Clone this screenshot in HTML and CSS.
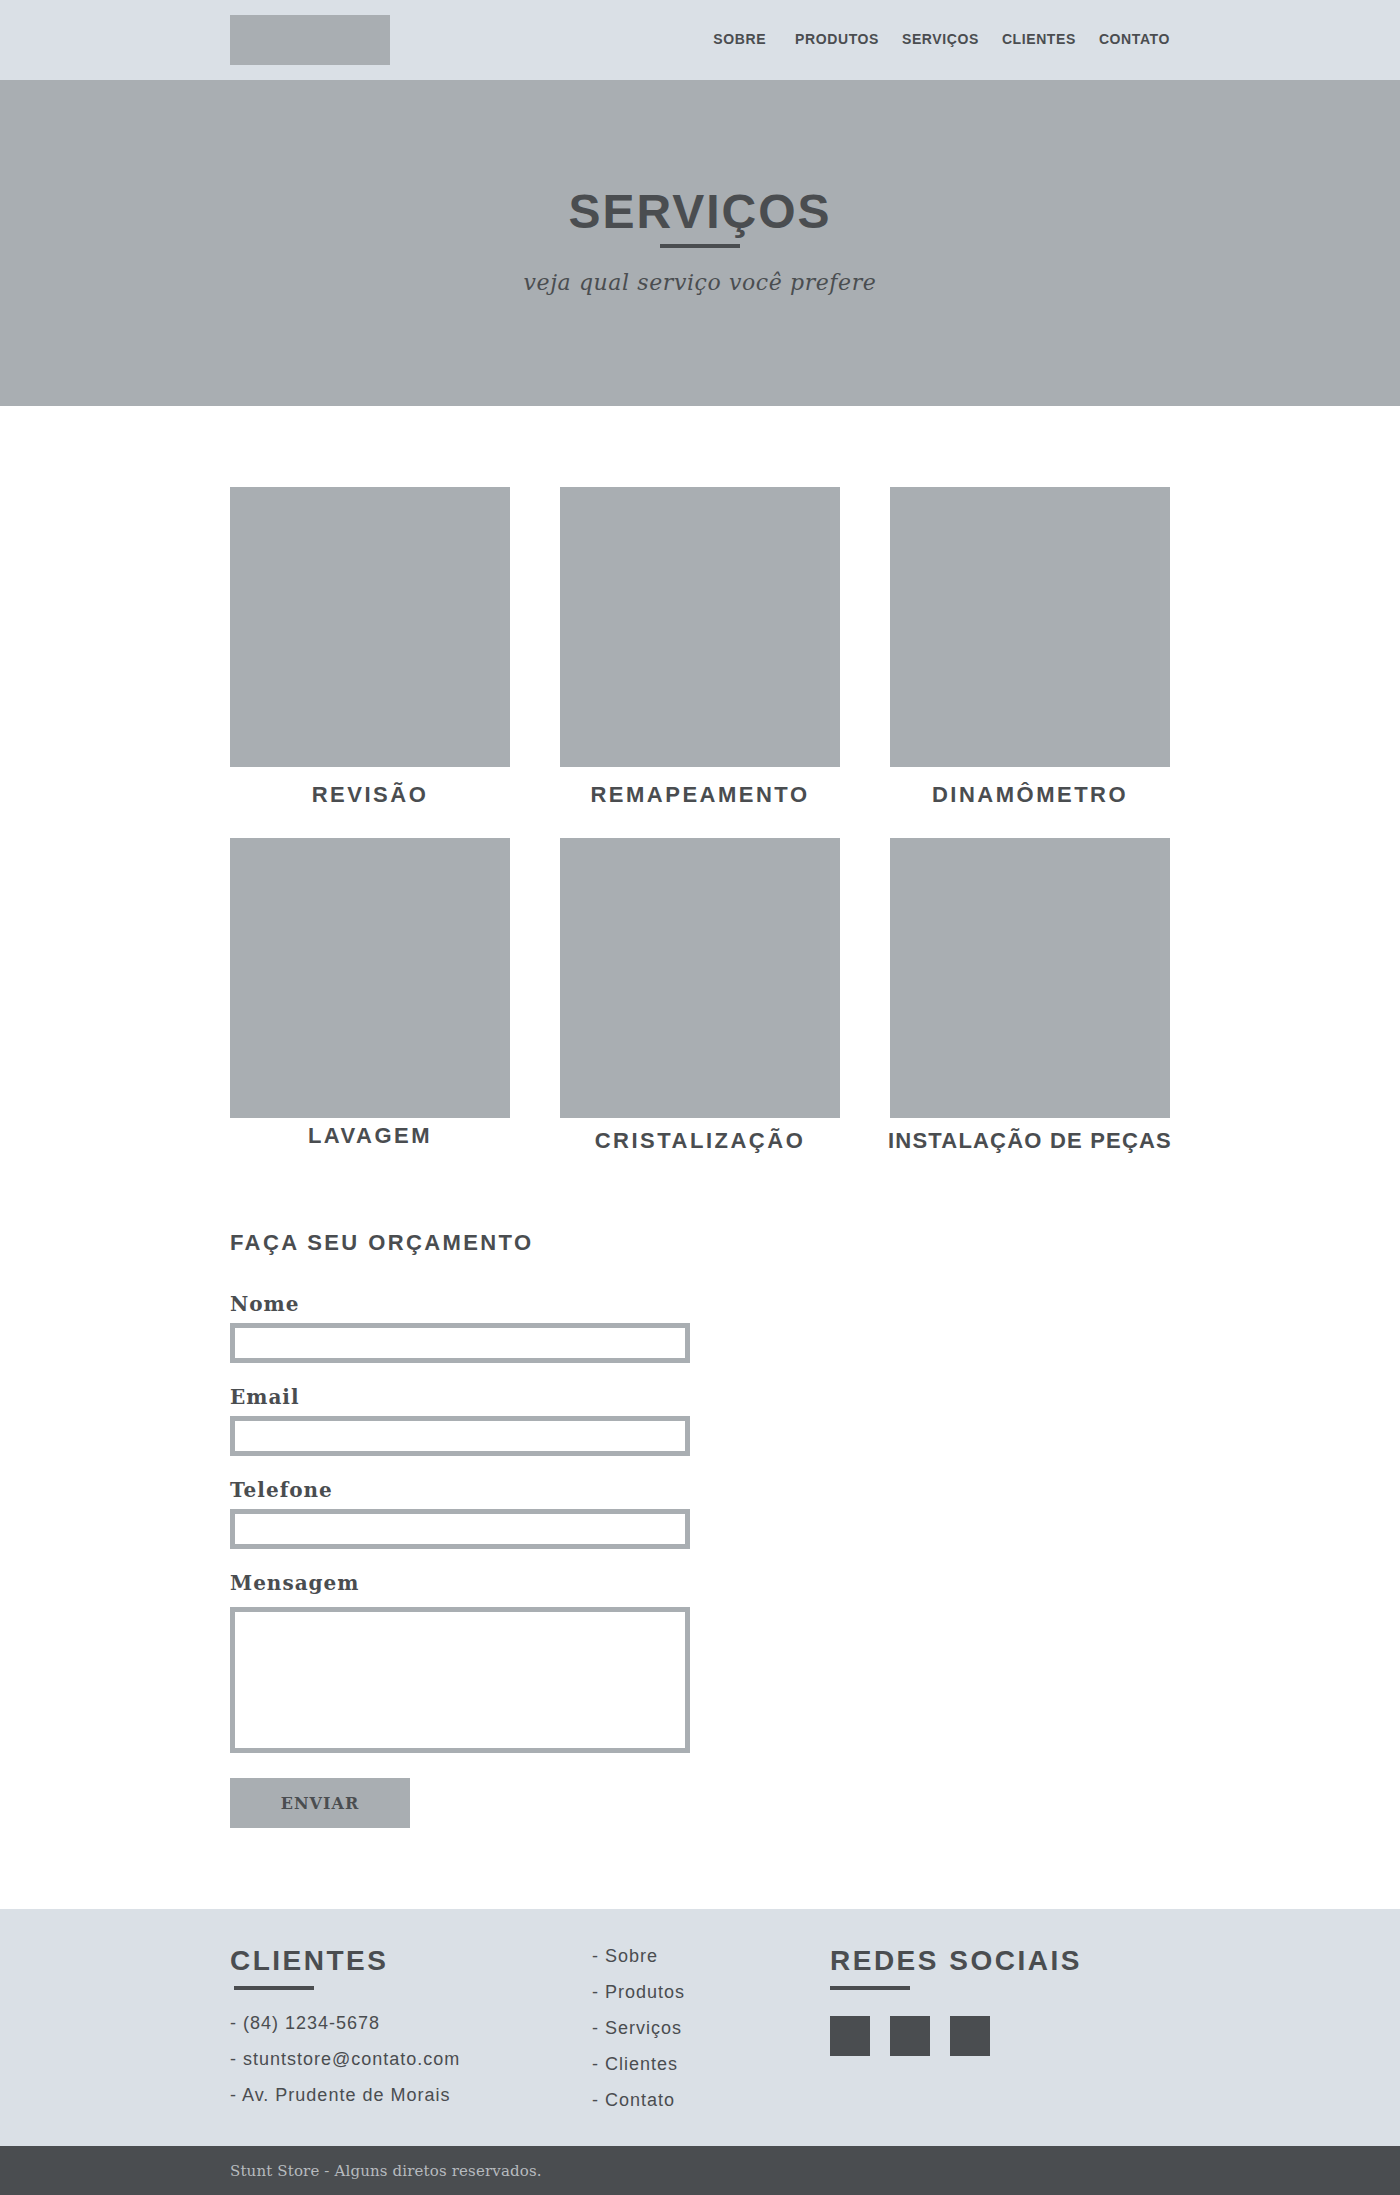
FILE: index.html
```html
<!DOCTYPE html>
<html lang="pt-BR">
<head>
  <meta charset="UTF-8">
  <title>Stunt Store - Serviços</title>
  <link rel="stylesheet" href="styles.css">
</head>
<body>
  <div id="header">
    <div class="wrap header-row">
      <div class="logo"></div>
      <ul class="nav">
        <li class="first"><a href="#">Sobre</a></li>
        <li><a href="#">Produtos</a></li>
        <li><a href="#">Serviços</a></li>
        <li><a href="#">Clientes</a></li>
        <li><a href="#">Contato</a></li>
      </ul>
    </div>
  </div>

  <div id="hero">
    <h1>Serviços</h1>
    <div class="bar"></div>
    <p class="tagline">veja qual serviço você prefere</p>
  </div>

  <div id="services" class="wrap">
    <div class="card">
      <div class="thumb"></div>
      <h2 class="card-title">Revisão</h2>
    </div>
    <div class="card">
      <div class="thumb"></div>
      <h2 class="card-title">Remapeamento</h2>
    </div>
    <div class="card">
      <div class="thumb"></div>
      <h2 class="card-title">Dinamômetro</h2>
    </div>
    <div class="card">
      <div class="thumb"></div>
      <h2 class="card-title lower up">Lavagem</h2>
    </div>
    <div class="card">
      <div class="thumb"></div>
      <h2 class="card-title lower">Cristalização</h2>
    </div>
    <div class="card">
      <div class="thumb"></div>
      <h2 class="card-title lower tight">Instalação de peças</h2>
    </div>
  </div>

  <div id="budget" class="wrap">
    <h3>Faça seu orçamento</h3>
    <form id="bForm" name="bForm" onsubmit="return(false);">
      <div class="field">
        <label for="nome">Nome</label>
        <input id="nome" name="nome" type="text">
      </div>
      <div class="field">
        <label for="email">Email</label>
        <input id="email" name="email" type="text">
      </div>
      <div class="field">
        <label for="telefone">Telefone</label>
        <input id="telefone" name="telefone" type="text">
      </div>
      <div class="field">
        <label for="mensagem">Mensagem</label>
        <textarea id="mensagem" name="mensagem"></textarea>
      </div>
      <button type="submit" class="send">Enviar</button>
    </form>
  </div>

  <div id="footer">
    <div class="wrap footer-cols">
      <div class="col">
        <h4>Clientes</h4>
        <div class="line shift"></div>
        <ul class="info">
          <li>- (84) 1234-5678</li>
          <li>- stuntstore@contato.com</li>
          <li>- Av. Prudente de Morais</li>
        </ul>
      </div>
      <ul class="links">
        <li><a href="#">- Sobre</a></li>
        <li><a href="#">- Produtos</a></li>
        <li><a href="#">- Serviços</a></li>
        <li><a href="#">- Clientes</a></li>
        <li><a href="#">- Contato</a></li>
      </ul>
      <div class="col">
        <h4>Redes sociais</h4>
        <div class="line"></div>
        <div class="social">
          <a href="#" class="sq"></a>
          <a href="#" class="sq"></a>
          <a href="#" class="sq"></a>
        </div>
      </div>
    </div>
  </div>

  <div id="copy">
    <div class="wrap">Stunt Store - Alguns diretos reservados.</div>
  </div>
</body>
</html>
```

FILE: styles.css
```css
body {
    margin: 0;
    background: #fff;
    color: #4a4d50;
    font-family: "Liberation Sans", Arial, sans-serif;
}

a {
    color: #4a4d50;
    text-decoration: none;
}

ul {
    list-style: none;
    margin: 0;
    padding: 0;
}

.wrap {
    width: 940px;
    margin: 0 auto;
}

/* header */

#header {
    background: #dae0e6;
    height: 80px;
}

.header-row {
    height: 80px;
    display: flex;
    align-items: center;
    justify-content: space-between;
}

.logo {
    width: 160px;
    height: 50px;
    background: #a9aeb2;
}

.nav {
    display: flex;
    gap: 23px;
    margin-top: -2px;
}

.nav li.first {
    margin-right: 6px;
}

.nav a {
    font-size: 14px;
    font-weight: bold;
    letter-spacing: 0.6px;
    text-transform: uppercase;
}

/* hero */

#hero {
    background: #a9aeb2;
    height: 326px;
    box-sizing: border-box;
    padding-top: 108px;
    text-align: center;
}

#hero h1 {
    margin: 0;
    font-size: 48px;
    line-height: 48px;
    letter-spacing: 2px;
    text-transform: uppercase;
}

#hero .bar {
    width: 80px;
    height: 4px;
    background: #4a4d50;
    margin: 8px auto 0;
}

.tagline {
    margin: 22px 0 0;
    font-family: "DejaVu Serif", Georgia, serif;
    font-style: italic;
    font-size: 22px;
    line-height: 26px;
    letter-spacing: 0.6px;
}

/* services */

#services {
    padding-top: 81px;
    display: grid;
    grid-template-columns: repeat(3, 280px);
    column-gap: 50px;
    row-gap: 30px;
}

.card {
    display: flex;
    flex-direction: column;
    align-items: center;
}

.thumb {
    width: 280px;
    height: 280px;
    background: #a9aeb2;
}

.card-title {
    margin: 15px 0 0;
    font-size: 22px;
    line-height: 26px;
    letter-spacing: 2.5px;
    white-space: nowrap;
    text-transform: uppercase;
}

.card-title.lower {
    margin-top: 10px;
}

.card-title.up {
    margin-top: 5px;
}

.card-title.tight {
    letter-spacing: 1.2px;
}

/* form */

#budget {
    padding-top: 76px;
    padding-bottom: 81px;
}

#budget h3 {
    margin: 0 0 35px;
    font-size: 22px;
    line-height: 26px;
    letter-spacing: 2.4px;
    text-transform: uppercase;
}

.field {
    margin-bottom: 21px;
}

.field label {
    display: block;
    margin-bottom: 6px;
    font-family: "DejaVu Serif", Georgia, serif;
    font-weight: bold;
    font-size: 20px;
    line-height: 26px;
    letter-spacing: 1px;
}

.field input,
.field textarea {
    display: block;
    width: 460px;
    height: 40px;
    box-sizing: border-box;
    margin: 0;
    border: 5px solid #a9aeb2;
    border-radius: 0;
    background: #fff;
    outline: none;
}

.field textarea {
    height: 146px;
    margin-top: 11px;
    resize: none;
}

.send {
    display: block;
    width: 180px;
    height: 50px;
    margin-top: 25px;
    border: 0;
    background: #a9aeb2;
    color: #4a4d50;
    font-family: "DejaVu Serif", Georgia, serif;
    font-weight: bold;
    font-size: 16px;
    letter-spacing: 1px;
    text-transform: uppercase;
    cursor: pointer;
}

/* footer */

#footer {
    background: #dae0e6;
}

.footer-cols {
    display: grid;
    grid-template-columns: 362px 238px 1fr;
    padding-top: 29px;
    padding-bottom: 28px;
}

.col {
    padding-top: 7px;
}

.col h4 {
    margin: 0;
    font-size: 28px;
    line-height: 32px;
    letter-spacing: 2.5px;
    text-transform: uppercase;
}

.col .line {
    width: 80px;
    height: 4px;
    background: #4a4d50;
    margin-top: 9px;
}

.col .line.shift {
    margin-left: 4px;
}

.info {
    margin-top: 15px;
}

.info li,
.links li {
    font-size: 18px;
    line-height: 36px;
    letter-spacing: 1px;
}

.social {
    display: flex;
    gap: 20px;
    margin-top: 26px;
}

.sq {
    width: 40px;
    height: 40px;
    background: #4a4d50;
}

#copy {
    background: #4a4d50;
    height: 50px;
    line-height: 50px;
    color: #b7bbbf;
    font-family: "DejaVu Serif", Georgia, serif;
    font-size: 15px;
    letter-spacing: 0.15px;
}
```
